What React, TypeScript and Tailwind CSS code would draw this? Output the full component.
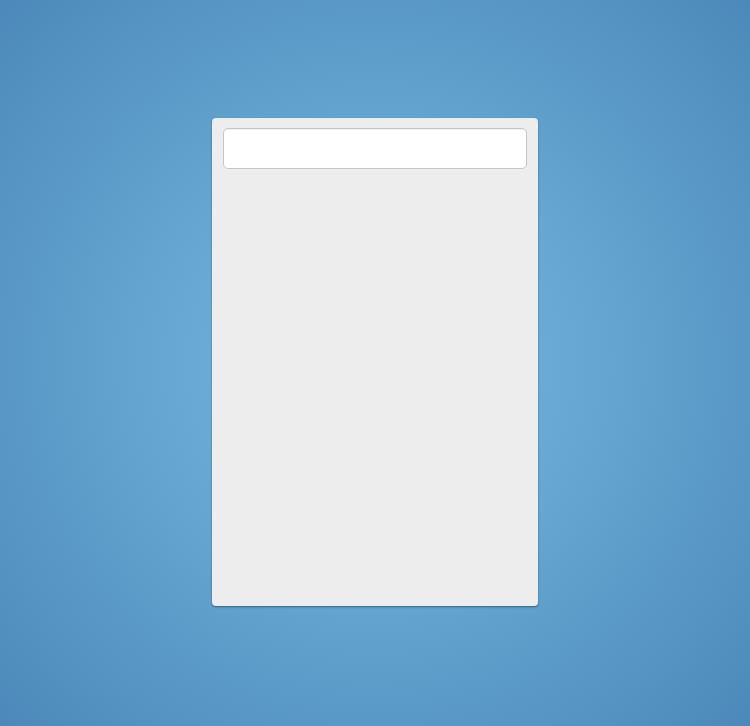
export default function App() {
  return (
    <div className="min-h-screen w-full flex justify-center pt-[118px] bg-[radial-gradient(circle_at_50%_50%,#76b6de_0%,#68aad5_35%,#4c89ba_100%)]">
      <div className="w-[326px] h-[488px] rounded-[4px] bg-[#ededed] p-[11px] pt-[10px] shadow-[0_1px_2px_rgba(20,60,90,0.6)]">
        <input
          type="text"
          className="block w-full h-[41px] rounded-[5px] bg-white border border-[#c6c6c6] shadow-[inset_0_1px_1px_rgba(0,0,0,0.06)] outline-none"
        />
      </div>
    </div>
  );
}
